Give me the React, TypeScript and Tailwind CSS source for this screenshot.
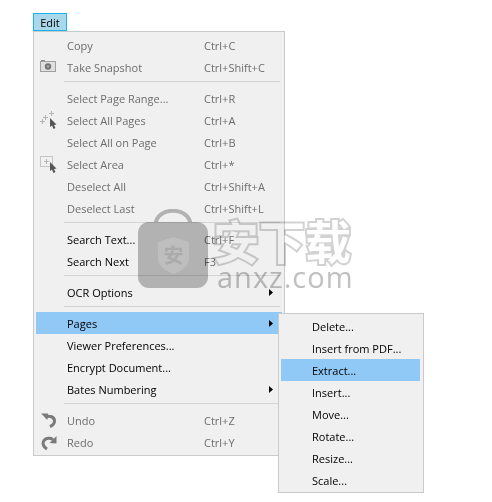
import { Fragment } from "react"

type Item = {
  label: string
  shortcut?: string
  icon?: React.ReactNode
  disabled?: boolean
  arrow?: boolean
  active?: boolean
}

const CameraIcon = () => (
  <svg width="18" height="14" viewBox="0 0 18 14">
    <rect x="1" y="0" width="4" height="2" fill="#8a8a8a" />
    <rect x="0.5" y="1.5" width="15" height="10" fill="#e0e0e0" stroke="#a0a0a0" />
    <circle cx="8" cy="6.5" r="3.2" fill="#747474" />
    <circle cx="8" cy="6.5" r="1.3" fill="#a8a8a8" />
  </svg>
)

const Cursor = ({ x, y }: { x: number; y: number }) => (
  <path transform={`translate(${x} ${y})`} d="M0 0 L0 9 L2 7.5 L3.5 11 L5.5 10 L4 7 L6.500 6.500 Z" fill="#555" />
)

const SelectPagesIcon = () => (
  <svg width="18" height="18" viewBox="0 0 18 18">
    <path d="M11.500 0v5M9 2.500h5M5.500 4v5M3 6.500h5M2.500 8v5M0 10.500h5" stroke="#b4b4b4" strokeWidth="1" fill="none" />
    <Cursor x={10} y={7} />
  </svg>
)

const SelectAreaIcon = () => (
  <svg width="18" height="18" viewBox="0 0 18 18">
    <rect x="0.500" y="1.500" width="12" height="10" fill="none" stroke="#9a9a9a" strokeDasharray="1 1" />
    <path d="M6.500 4v5M4 6.500h5" stroke="#b4b4b4" fill="none" />
    <Cursor x={10} y={7} />
  </svg>
)

const UndoIcon = () => (
  <svg width="16" height="15" viewBox="0 0 16 15">
    <path d="M4 4 C9 2, 13.500 4, 13.500 8 C13.500 10.500 11.500 12.500 9 13.500" fill="none" stroke="#7a7a7a" strokeWidth="3" />
    <path d="M0 0.500 L7 0.500 L6.500 7 Z" fill="#7a7a7a" />
  </svg>
)

const RedoIcon = () => (
  <svg width="16" height="15" viewBox="0 0 16 15">
    <path d="M6 14 C2.500 12, 1 8.500, 3 5.500 C5 3, 9 2.500, 12 4.500" fill="none" stroke="#7a7a7a" strokeWidth="3" />
    <path d="M15.500 1 L15.500 8.500 L8.500 8 Z" fill="#7a7a7a" />
  </svg>
)

const groups: Item[][] = [
  [
    { label: "Copy", shortcut: "Ctrl+C", disabled: true },
    { label: "Take Snapshot", shortcut: "Ctrl+Shift+C", disabled: true, icon: <CameraIcon /> },
  ],
  [
    { label: "Select Page Range...", shortcut: "Ctrl+R", disabled: true },
    { label: "Select All Pages", shortcut: "Ctrl+A", disabled: true, icon: <SelectPagesIcon /> },
    { label: "Select All on Page", shortcut: "Ctrl+B", disabled: true },
    { label: "Select Area", shortcut: "Ctrl+*", disabled: true, icon: <SelectAreaIcon /> },
    { label: "Deselect All", shortcut: "Ctrl+Shift+A", disabled: true },
    { label: "Deselect Last", shortcut: "Ctrl+Shift+L", disabled: true },
  ],
  [
    { label: "Search Text...", shortcut: "Ctrl+F" },
    { label: "Search Next", shortcut: "F3" },
  ],
  [{ label: "OCR Options", arrow: true }],
  [
    { label: "Pages", arrow: true, active: true },
    { label: "Viewer Preferences..." },
    { label: "Encrypt Document..." },
    { label: "Bates Numbering", arrow: true },
  ],
  [
    { label: "Undo", shortcut: "Ctrl+Z", disabled: true, icon: <UndoIcon /> },
    { label: "Redo", shortcut: "Ctrl+Y", disabled: true, icon: <RedoIcon /> },
  ],
]

const subItems = ["Delete...", "Insert from PDF...", "Extract...", "Insert...", "Move...", "Rotate...", "Resize...", "Scale..."]

function MenuRow({ item }: { item: Item }) {
  return (
    <div className={`flex h-[22px] items-center ${item.active ? "bg-[#90c8f6]" : ""}`}>
      <div className="flex w-[31px] shrink-0 items-center justify-center pr-[6px]">{item.icon}</div>
      <div className={`w-[137px] shrink-0 whitespace-nowrap ${item.disabled ? "text-[#6d6d6d]" : "text-black"}`}>
        {item.label}
      </div>
      <div className="flex-1 whitespace-nowrap text-[#6d6d6d]">{item.shortcut}</div>
      {item.arrow && (
        <svg width="4" height="7" viewBox="0 0 4 7" className="mr-[9px]">
          <path d="M0 0 L4 3.500 L0 7 Z" fill="#000" />
        </svg>
      )}
    </div>
  )
}

export default function App() {
  return (
    <div className="relative h-[502px] w-[492px] overflow-hidden bg-white pl-[33px] pt-[13px] font-['Open_Sans','Noto_Sans',sans-serif] text-[11px] leading-none">
      <div className="flex h-[18px] w-[34px] items-center justify-center border border-[#18b4ee] bg-[#a8d8ea] text-black">
        Edit
      </div>

      <div className="relative w-[252px] border border-[#cacaca] bg-[#f0f0f0] p-[2px]">
        {groups.map((group, i) => (
          <Fragment key={i}>
            {i > 0 && <div className="mb-[5px] ml-[28px] mr-[2px] mt-[3px] h-px bg-[#d4d4d4]" />}
            {group.map((item) => (
              <MenuRow key={item.label} item={item} />
            ))}
          </Fragment>
        ))}

        {/* submenu */}
        <div className="absolute left-[244px] top-[281px] w-[146px] border border-[#cacaca] bg-[#f0f0f0] py-px pl-[2px] pr-[3px]">
          {subItems.map((label) => (
            <div
              key={label}
              className={`flex h-[22px] items-center pl-[31px] text-black ${label === "Extract..." ? "bg-[#90c8f6]" : ""}`}
            >
              {label}
            </div>
          ))}
        </div>
      </div>

      {/* watermark */}
      <div className="pointer-events-none absolute left-[138px] top-[209px] flex items-start gap-[5px] mix-blend-multiply">
        <svg width="70" height="80" viewBox="0 0 70 80">
          <path d="M17.500 16 C18 -3 52 -3 52.500 16" fill="none" stroke="#bdbdbd" strokeWidth="4" />
          <rect x="0" y="13" width="70" height="66" rx="11" fill="#bdbdbd" />
          <path d="M35.500 28 L51 33 L51 50 C51 57 43 62 35.500 65 C28 62 20 57 20 50 L20 33 Z" fill="#cacaca" />
          <text x="35.500" y="54" textAnchor="middle" fontSize="20" fontWeight="700" fill="#b6b6b6" fontFamily="'Noto Sans CJK SC', sans-serif">安</text>
        </svg>
        <div className="flex flex-col pt-[7px]">
          <div className="whitespace-nowrap font-['Noto_Sans_CJK_SC',sans-serif] text-[46px] font-bold leading-none text-white [-webkit-text-stroke:4px_#d2d2d2] [paint-order:stroke_fill]">
            安下载
          </div>
          <div className="whitespace-nowrap pl-[4px] font-['Open_Sans',sans-serif] text-[29px] leading-none tracking-[1px] text-[#c0c0c0]">
            anxz.com
          </div>
        </div>
      </div>
    </div>
  )
}
